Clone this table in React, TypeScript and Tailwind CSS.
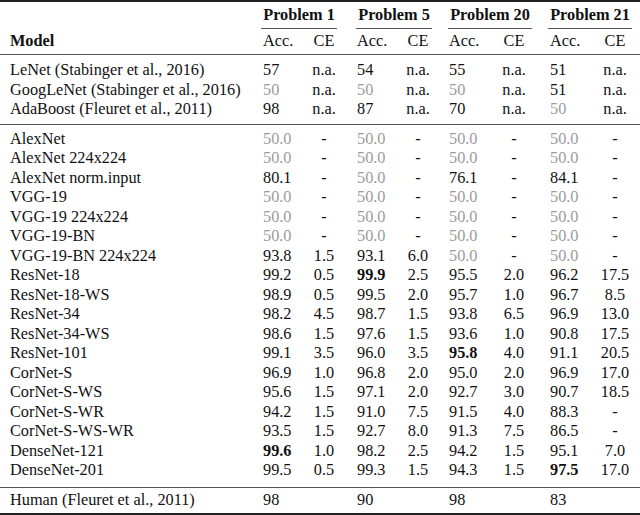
type Row = [string, ...string[]];

// "g:" marks a grey (chance-level) value, "b:" a bold best value
const baselines: Row[] = [
  ['LeNet (Stabinger et al., 2016)', '57', 'n.a.', '54', 'n.a.', '55', 'n.a.', '51', 'n.a.'],
  ['GoogLeNet (Stabinger et al., 2016)', 'g:50', 'n.a.', 'g:50', 'n.a.', 'g:50', 'n.a.', '51', 'n.a.'],
  ['AdaBoost (Fleuret et al., 2011)', '98', 'n.a.', '87', 'n.a.', '70', 'n.a.', 'g:50', 'n.a.'],
];

const G = 'g:50.0';

const models: Row[] = [
  ['AlexNet', G, '-', G, '-', G, '-', G, '-'],
  ['AlexNet 224x224', G, '-', G, '-', G, '-', G, '-'],
  ['AlexNet norm.input', '80.1', '-', G, '-', '76.1', '-', '84.1', '-'],
  ['VGG-19', G, '-', G, '-', G, '-', G, '-'],
  ['VGG-19 224x224', G, '-', G, '-', G, '-', G, '-'],
  ['VGG-19-BN', G, '-', G, '-', G, '-', G, '-'],
  ['VGG-19-BN 224x224', '93.8', '1.5', '93.1', '6.0', G, '-', G, '-'],
  ['ResNet-18', '99.2', '0.5', 'b:99.9', '2.5', '95.5', '2.0', '96.2', '17.5'],
  ['ResNet-18-WS', '98.9', '0.5', '99.5', '2.0', '95.7', '1.0', '96.7', '8.5'],
  ['ResNet-34', '98.2', '4.5', '98.7', '1.5', '93.8', '6.5', '96.9', '13.0'],
  ['ResNet-34-WS', '98.6', '1.5', '97.6', '1.5', '93.6', '1.0', '90.8', '17.5'],
  ['ResNet-101', '99.1', '3.5', '96.0', '3.5', 'b:95.8', '4.0', '91.1', '20.5'],
  ['CorNet-S', '96.9', '1.0', '96.8', '2.0', '95.0', '2.0', '96.9', '17.0'],
  ['CorNet-S-WS', '95.6', '1.5', '97.1', '2.0', '92.7', '3.0', '90.7', '18.5'],
  ['CorNet-S-WR', '94.2', '1.5', '91.0', '7.5', '91.5', '4.0', '88.3', '-'],
  ['CorNet-S-WS-WR', '93.5', '1.5', '92.7', '8.0', '91.3', '7.5', '86.5', '-'],
  ['DenseNet-121', 'b:99.6', '1.0', '98.2', '2.5', '94.2', '1.5', '95.1', '7.0'],
  ['DenseNet-201', '99.5', '0.5', '99.3', '1.5', '94.3', '1.5', 'b:97.5', '17.0'],
];

const human: Row = ['Human (Fleuret et al., 2011)', '98', '', '90', '', '98', '', '83', ''];

const grid = 'grid grid-cols-[263px_41px_40px_54px_40px_56px_40px_61px_40px]';
const accPad = ['', 'pl-[13px]', 'pl-[11px]', 'pl-[16px]'];

function Value({ v }: { v: string }) {
  if (v.startsWith('g:')) return <span className="text-[#9b9b9b]">{v.slice(2)}</span>;
  if (v.startsWith('b:')) return <span className="font-bold">{v.slice(2)}</span>;
  return <span>{v}</span>;
}

function TableRow({ row }: { row: Row }) {
  const [name, ...vals] = row;
  return (
    <div className={`${grid} h-[19.5px] leading-[19.5px]`}>
      <div className="whitespace-nowrap pl-[10px]">{name}</div>
      {vals.map((v, i) =>
        i % 2 === 0 ? (
          <div key={i} className={accPad[i / 2]}>
            <Value v={v} />
          </div>
        ) : (
          <div key={i} className="text-center">
            <Value v={v} />
          </div>
        ),
      )}
    </div>
  );
}

export default function App() {
  return (
    <div
      className="h-[515px] w-[640px] overflow-hidden bg-white text-[16.3px] text-[#111]"
      style={{ fontFamily: '"Liberation Serif", "Times New Roman", serif' }}
    >
      <div className="border-t-2 border-[#222]" />

      {/* problem headers with trimmed rules */}
      <div className={`${grid} h-[27px] font-bold`}>
        <div />
        <div className="col-span-2 -ml-[2px] mr-[7px] flex items-center justify-center border-b border-[#555]">
          Problem 1
        </div>
        <div className="col-span-2 ml-[12px] mr-[6px] flex items-center justify-center border-b border-[#555]">
          Problem 5
        </div>
        <div className="col-span-2 ml-[10px] mr-[2px] flex items-center justify-center border-b border-[#555]">
          Problem 20
        </div>
        <div className="col-span-2 ml-[14px] mr-[3px] flex items-center justify-center border-b border-[#555]">
          Problem 21
        </div>
      </div>

      <div className={`${grid} h-[26px] items-center border-b border-[#555]`}>
        <div className="pl-[10px] font-bold">Model</div>
        {[0, 1, 2, 3].map((g) => [
          <div key={`a${g}`} className={accPad[g]}>
            Acc.
          </div>,
          <div key={`c${g}`} className="text-center">
            CE
          </div>,
        ])}
      </div>

      <div className="border-b border-[#555] pb-[5px] pt-[5px]">
        {baselines.map((r) => (
          <TableRow key={r[0]} row={r} />
        ))}
      </div>

      <div className="border-b border-[#555] pb-[7px] pt-[4px]">
        {models.map((r) => (
          <TableRow key={r[0]} row={r} />
        ))}
      </div>

      <div className="border-b-2 border-[#222] pb-[4px] pt-[2px]">
        <TableRow row={human} />
      </div>
    </div>
  );
}
